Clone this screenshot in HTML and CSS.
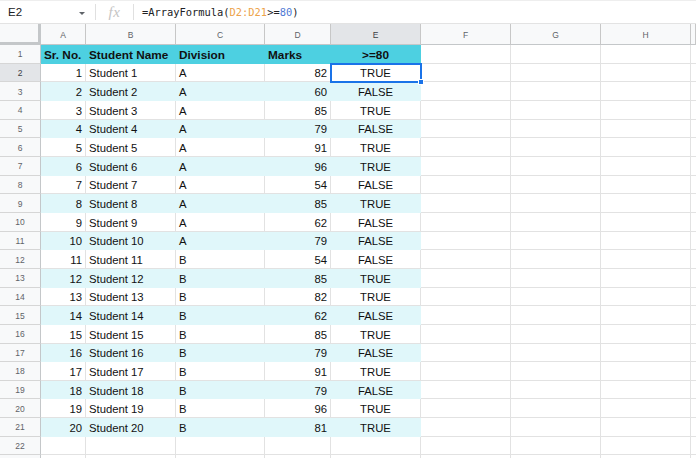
FILE: index.html
```html
<!DOCTYPE html>
<html>
<head>
<meta charset="utf-8">
<link rel="stylesheet" href="styles.css">
</head>
<body>
<div class="fbar">
  <div class="namebox"><span class="ref">E2</span><span class="caret"></span></div>
  <div class="sep"></div>
  <div class="fx">fx</div>
  <div class="sep"></div>
  <div class="formula">=ArrayFormula(<span class="rng">D2:D21</span>&gt;=<span class="num">80</span>)</div>
</div>
<div class="sheet">
  <div class="row colhead">
    <div class="corner"></div>
    <div class="ch">A</div><div class="ch">B</div><div class="ch">C</div><div class="ch">D</div><div class="ch sel">E</div><div class="ch">F</div><div class="ch">G</div><div class="ch">H</div><div class="ch last"></div>
  </div>
  <div class="row head">
    <div class="rh">1</div>
    <div class="c">Sr. No.</div><div class="c">Student Name</div><div class="c">Division</div><div class="c">Marks</div><div class="c ctr">&gt;=80</div><div class="c e"></div><div class="c e"></div><div class="c e"></div><div class="c e"></div>
  </div>
  <div class="row">
    <div class="rh sel">2</div>
    <div class="c r">1</div><div class="c">Student 1</div><div class="c">A</div><div class="c r">82</div><div class="c ctr active">TRUE<span class="handle"></span></div><div class="c e"></div><div class="c e"></div><div class="c e"></div><div class="c e"></div>
  </div>
  <div class="row band">
    <div class="rh">3</div>
    <div class="c r">2</div><div class="c">Student 2</div><div class="c">A</div><div class="c r">60</div><div class="c ctr">FALSE</div><div class="c e"></div><div class="c e"></div><div class="c e"></div><div class="c e"></div>
  </div>
  <div class="row">
    <div class="rh">4</div>
    <div class="c r">3</div><div class="c">Student 3</div><div class="c">A</div><div class="c r">85</div><div class="c ctr">TRUE</div><div class="c e"></div><div class="c e"></div><div class="c e"></div><div class="c e"></div>
  </div>
  <div class="row band">
    <div class="rh">5</div>
    <div class="c r">4</div><div class="c">Student 4</div><div class="c">A</div><div class="c r">79</div><div class="c ctr">FALSE</div><div class="c e"></div><div class="c e"></div><div class="c e"></div><div class="c e"></div>
  </div>
  <div class="row">
    <div class="rh">6</div>
    <div class="c r">5</div><div class="c">Student 5</div><div class="c">A</div><div class="c r">91</div><div class="c ctr">TRUE</div><div class="c e"></div><div class="c e"></div><div class="c e"></div><div class="c e"></div>
  </div>
  <div class="row band">
    <div class="rh">7</div>
    <div class="c r">6</div><div class="c">Student 6</div><div class="c">A</div><div class="c r">96</div><div class="c ctr">TRUE</div><div class="c e"></div><div class="c e"></div><div class="c e"></div><div class="c e"></div>
  </div>
  <div class="row">
    <div class="rh">8</div>
    <div class="c r">7</div><div class="c">Student 7</div><div class="c">A</div><div class="c r">54</div><div class="c ctr">FALSE</div><div class="c e"></div><div class="c e"></div><div class="c e"></div><div class="c e"></div>
  </div>
  <div class="row band">
    <div class="rh">9</div>
    <div class="c r">8</div><div class="c">Student 8</div><div class="c">A</div><div class="c r">85</div><div class="c ctr">TRUE</div><div class="c e"></div><div class="c e"></div><div class="c e"></div><div class="c e"></div>
  </div>
  <div class="row">
    <div class="rh">10</div>
    <div class="c r">9</div><div class="c">Student 9</div><div class="c">A</div><div class="c r">62</div><div class="c ctr">FALSE</div><div class="c e"></div><div class="c e"></div><div class="c e"></div><div class="c e"></div>
  </div>
  <div class="row band">
    <div class="rh">11</div>
    <div class="c r">10</div><div class="c">Student 10</div><div class="c">A</div><div class="c r">79</div><div class="c ctr">FALSE</div><div class="c e"></div><div class="c e"></div><div class="c e"></div><div class="c e"></div>
  </div>
  <div class="row">
    <div class="rh">12</div>
    <div class="c r">11</div><div class="c">Student 11</div><div class="c">B</div><div class="c r">54</div><div class="c ctr">FALSE</div><div class="c e"></div><div class="c e"></div><div class="c e"></div><div class="c e"></div>
  </div>
  <div class="row band">
    <div class="rh">13</div>
    <div class="c r">12</div><div class="c">Student 12</div><div class="c">B</div><div class="c r">85</div><div class="c ctr">TRUE</div><div class="c e"></div><div class="c e"></div><div class="c e"></div><div class="c e"></div>
  </div>
  <div class="row">
    <div class="rh">14</div>
    <div class="c r">13</div><div class="c">Student 13</div><div class="c">B</div><div class="c r">82</div><div class="c ctr">TRUE</div><div class="c e"></div><div class="c e"></div><div class="c e"></div><div class="c e"></div>
  </div>
  <div class="row band">
    <div class="rh">15</div>
    <div class="c r">14</div><div class="c">Student 14</div><div class="c">B</div><div class="c r">62</div><div class="c ctr">FALSE</div><div class="c e"></div><div class="c e"></div><div class="c e"></div><div class="c e"></div>
  </div>
  <div class="row">
    <div class="rh">16</div>
    <div class="c r">15</div><div class="c">Student 15</div><div class="c">B</div><div class="c r">85</div><div class="c ctr">TRUE</div><div class="c e"></div><div class="c e"></div><div class="c e"></div><div class="c e"></div>
  </div>
  <div class="row band">
    <div class="rh">17</div>
    <div class="c r">16</div><div class="c">Student 16</div><div class="c">B</div><div class="c r">79</div><div class="c ctr">FALSE</div><div class="c e"></div><div class="c e"></div><div class="c e"></div><div class="c e"></div>
  </div>
  <div class="row">
    <div class="rh">18</div>
    <div class="c r">17</div><div class="c">Student 17</div><div class="c">B</div><div class="c r">91</div><div class="c ctr">TRUE</div><div class="c e"></div><div class="c e"></div><div class="c e"></div><div class="c e"></div>
  </div>
  <div class="row band">
    <div class="rh">19</div>
    <div class="c r">18</div><div class="c">Student 18</div><div class="c">B</div><div class="c r">79</div><div class="c ctr">FALSE</div><div class="c e"></div><div class="c e"></div><div class="c e"></div><div class="c e"></div>
  </div>
  <div class="row">
    <div class="rh">20</div>
    <div class="c r">19</div><div class="c">Student 19</div><div class="c">B</div><div class="c r">96</div><div class="c ctr">TRUE</div><div class="c e"></div><div class="c e"></div><div class="c e"></div><div class="c e"></div>
  </div>
  <div class="row band">
    <div class="rh">21</div>
    <div class="c r">20</div><div class="c">Student 20</div><div class="c">B</div><div class="c r">81</div><div class="c ctr">TRUE</div><div class="c e"></div><div class="c e"></div><div class="c e"></div><div class="c e"></div>
  </div>
  <div class="row">
    <div class="rh">22</div>
    <div class="c"></div><div class="c"></div><div class="c"></div><div class="c"></div><div class="c"></div><div class="c e"></div><div class="c e"></div><div class="c e"></div><div class="c e"></div>
  </div>
  <div class="row">
    <div class="rh"></div>
    <div class="c"></div><div class="c"></div><div class="c"></div><div class="c"></div><div class="c"></div><div class="c e"></div><div class="c e"></div><div class="c e"></div><div class="c e"></div>
  </div>
</div>
</body>
</html>
```
FILE: styles.css
```css
* { box-sizing: border-box; }
html, body { margin: 0; padding: 0; background: #fff; overflow: hidden; }
body { font-family: "Liberation Sans", Arial, sans-serif; color: #000; width: 696px; height: 458px; }

.fbar {
  height: 24px;
  display: flex;
  align-items: center;
  border-top: 1px solid #eeeeee;
  border-bottom: 1px solid #e3e3e3;
}
.namebox {
  width: 95px;
  display: flex;
  align-items: center;
  justify-content: space-between;
  padding: 0 10px 0 8px;
}
.ref { font-size: 11.5px; color: #202124; }
.caret {
  width: 0; height: 0;
  border-left: 3px solid transparent;
  border-right: 3px solid transparent;
  border-top: 3px solid #5f6368;
  margin-top: 2px;
}
.sep { width: 1px; height: 16px; background: #e0e0e0; }
.fx {
  width: 37px;
  text-align: center;
  font-family: "Liberation Serif", serif;
  font-style: italic;
  font-size: 15px;
  color: #c4c4c4;
  letter-spacing: 0.5px;
}
.formula {
  padding-left: 8px;
  font-family: "DejaVu Sans Mono", "Liberation Mono", monospace;
  font-size: 10.4px;
  color: #202124;
}
.rng { color: #eda34a; }
.num { color: #4f79d4; }

.sheet { display: flex; flex-direction: column; }
.row {
  display: grid;
  grid-template-columns: 41px 45px 90px 89px 66px 90px 90px 90px 90px 5px;
  height: 18.67px;
}
.colhead { height: 21px; }
.corner {
  background: #f8f9fa;
  border-right: 3px solid #c4c7c9;
  border-bottom: 3px solid #c4c7c9;
}
.ch {
  background: #f8f9fa;
  border-right: 1px solid #c7c7c7;
  border-bottom: 1px solid #c4c7c9;
  font-size: 8.5px;
  color: #5f6368;
  display: flex;
  align-items: center;
  justify-content: center;
  padding-top: 1px;
}
.ch.sel { background: #e3e5e8; color: #3c4043; }
.rh {
  background: #f8f9fa;
  border-right: 1px solid #c4c7c9;
  border-bottom: 1px solid #d6d6d6;
  font-size: 8.5px;
  color: #5f6368;
  display: flex;
  align-items: center;
  justify-content: center;
  padding-top: 1px;
}
.rh.sel { background: #e3e5e8; color: #3c4043; }
.c {
  position: relative;
  border-right: 1px solid #e2e2e2;
  border-bottom: 1px solid #e2e2e2;
  font-size: 11.3px;
  padding: 2px 3px 0;
  display: flex;
  align-items: center;
  white-space: nowrap;
  color: #111;
}
.c.r { justify-content: flex-end; }
.c.ctr { justify-content: center; }
.head .c { background: #4dd0e1; border-color: #4dd0e1; font-weight: bold; font-size: 11.8px; }
.head .c.e { background: #fff; border-color: #e2e2e2; }
.band .c { background: #e0f7fa; border-color: #e0f7fa; }
.band .c.e { background: #fff; border-color: #e2e2e2; }
.active { outline: 2px solid #1a73e8; outline-offset: -1px; z-index: 2; }
.handle {
  position: absolute;
  right: -4px;
  bottom: -4px;
  width: 6px;
  height: 6px;
  background: #1a73e8;
  border: 1px solid #fff;
}
```
